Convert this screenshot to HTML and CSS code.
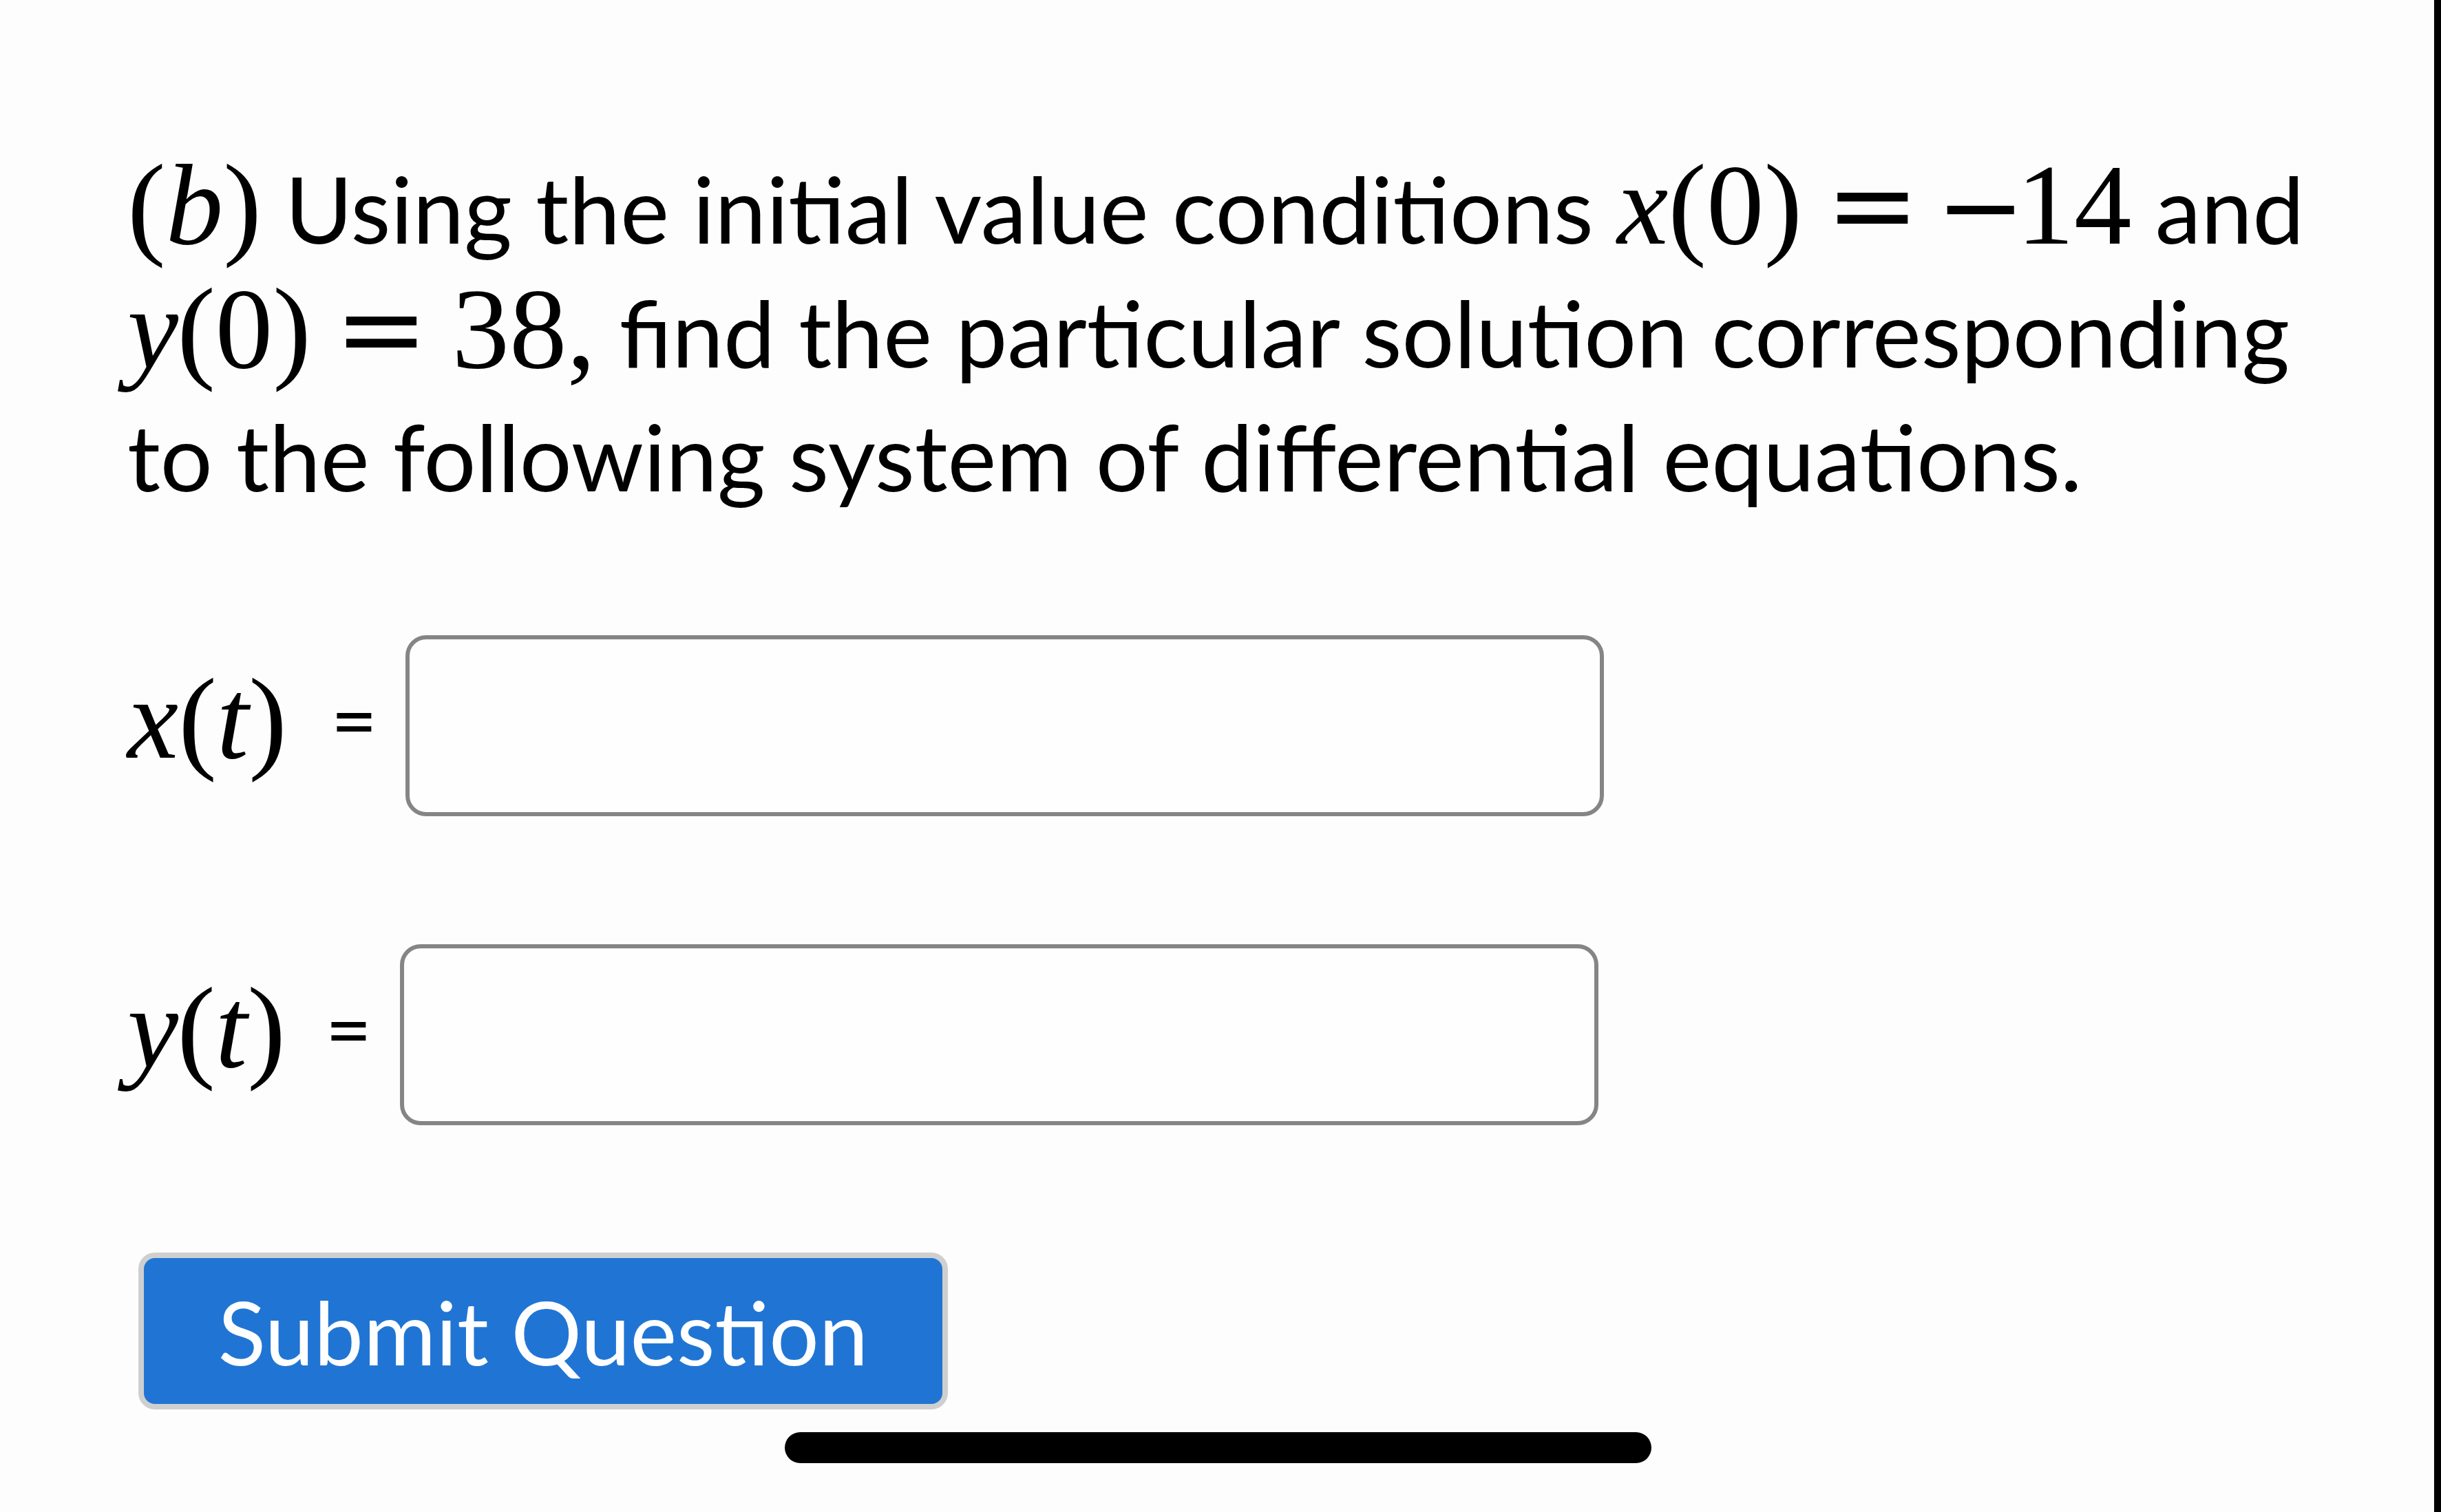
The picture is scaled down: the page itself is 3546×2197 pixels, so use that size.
FILE: index.html
```html
<!DOCTYPE html>
<html lang="en">
<head>
<meta charset="utf-8">
<title>Question</title>
<link rel="stylesheet" href="styles.css">
</head>
<body>
<div class="screen">
  <main class="content">
    <p class="prompt"><span class="m">(<i>b</i>)</span> Using the initial value conditions <span class="m"><i>x</i>(0)<span class="rel">=</span><span class="neg">−</span>14</span> and<br><span class="m"><i class="vy">y</i>(0)<span class="rel">=</span>38,</span> find the particular solution corresponding<br>to the following system of differential equations.</p>
    <div class="answer-row">
      <label class="label"><span class="m"><i>x</i>(<i>t</i>)</span><span class="eq">=</span></label>
      <input class="field" type="text" aria-label="x(t)">
    </div>
    <div class="answer-row">
      <label class="label label-y"><span class="m"><i class="vy">y</i>(<i>t</i>)</span><span class="eq">=</span></label>
      <input class="field" type="text" aria-label="y(t)">
    </div>
    <div class="actions">
      <button class="submit" type="button">Submit Question</button>
    </div>
  </main>
  <div class="edge"></div>
</div>
<div class="home-indicator"></div>
</body>
</html>
```

FILE: styles.css
```css
html, body {
  margin: 0;
  padding: 0;
  background: #fdfdfd;
}
.screen {
  display: flex;
  min-height: 2197px;
}
.content {
  flex: 1;
  padding: 213px 0 0 185px;
  font-family: "Lato", "Open Sans", sans-serif;
  color: #000;
}
.edge {
  width: 10px;
  background: #000;
}
.prompt {
  margin: 0;
  font-size: 134px;
  line-height: 180px;
  white-space: nowrap;
}
.m {
  font-family: "Liberation Serif", serif;
  font-size: 167px;
  line-height: 1;
}
.m i {
  font-style: italic;
}
.m .vy {
  margin-right: -2px;
}
.rel {
  font-family: "DejaVu Serif", serif;
  font-size: 163px;
  margin: 0 34px;
}
.neg {
  font-family: "DejaVu Serif", serif;
  font-size: 155px;
  margin: 0 -13px 0 -10px;
}
.answer-row {
  display: flex;
  align-items: center;
  margin-top: 170px;
}
.answer-row + .answer-row {
  margin-top: 186px;
}
.label {
  display: flex;
  align-items: center;
  gap: 64px;
  margin-right: 41px;
  margin-bottom: 20px;
}
.label-y {
  gap: 58px;
}
.eq {
  font-family: "Lato", sans-serif;
  font-size: 116px;
  line-height: 1;
}
.field {
  box-sizing: border-box;
  width: 1741px;
  height: 263px;
  margin: 0;
  border: 6px solid #858585;
  border-radius: 30px;
  background: #fefefe;
}
.actions {
  margin-top: 185px;
  padding-left: 16px;
}
.submit {
  box-sizing: border-box;
  width: 1176px;
  height: 228px;
  border: 8px solid #cfcfcf;
  border-radius: 24px;
  background: #2075d4;
  color: #fff;
  font-family: "Lato", "Open Sans", sans-serif;
  font-size: 128px;
}
.home-indicator {
  position: absolute;
  left: 1140px;
  top: 2081px;
  width: 1259px;
  height: 45px;
  border-radius: 23px;
  background: #000;
}
```
